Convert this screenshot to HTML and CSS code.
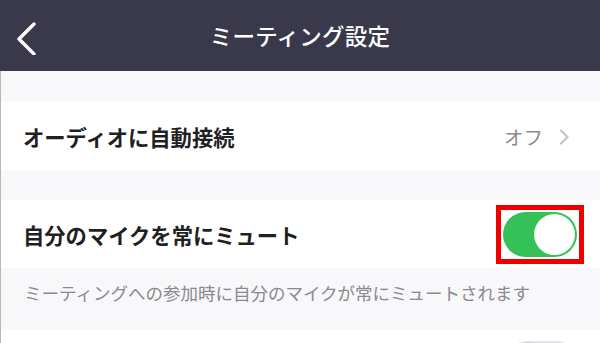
FILE: index.html
```html
<!DOCTYPE html>
<html lang="ja">
<head>
<meta charset="utf-8">
<link rel="stylesheet" href="styles.css">
</head>
<body>
<header class="nav">
  <div class="nav-back">
    <svg width="24" height="36" viewBox="0 0 24 36"><path d="M18 5 L3 20 L18 35" fill="none" stroke="#fff" stroke-width="3.4" stroke-linecap="round" stroke-linejoin="round"/></svg>
  </div>
  <div class="nav-title">ミーティング設定</div>
  <div></div>
</header>
<main class="content">
  <div class="gap gap-top"></div>
  <div class="row">
    <span class="label">オーディオに自動接続</span>
    <span class="value">オフ
      <svg class="chev" width="12" height="16" viewBox="0 0 12 16"><path d="M2 1.5 L8.5 8 L2 14.5" fill="none" stroke="#c5c5c8" stroke-width="2.2" stroke-linecap="round" stroke-linejoin="round"/></svg>
    </span>
  </div>
  <div class="gap"></div>
  <div class="row">
    <span class="label">自分のマイクを常にミュート</span>
    <span class="highlight"><span class="toggle on"><span class="knob"></span></span></span>
  </div>
  <div class="desc">ミーティングへの参加時に自分のマイクが常にミュートされます</div>
  <div class="row row-last">
    <span class="label"></span>
    <span class="toggle-slot"><span class="toggle off"><span class="knob"></span></span></span>
  </div>
</main>
</body>
</html>
```

FILE: styles.css
```css
html, body {
  margin: 0;
  padding: 0;
  background: #ffffff;
  font-family: "Noto Sans CJK JP", "Noto Sans", sans-serif;
  overflow: hidden;
}

.nav {
  height: 71px;
  background: #3a394c;
  display: grid;
  grid-template-columns: 1fr auto 1fr;
  align-items: center;
}

.nav-back {
  padding-left: 16px;
  display: flex;
  align-items: center;
  padding-top: 2px;
}

.nav-title {
  color: #ffffff;
  font-size: 22.5px;
  font-weight: 500;
  letter-spacing: 0.2px;
  padding-bottom: 2px;
}

.content {
  border-left: 1px solid #b8b8b8;
  background: #f8f7f9;
}

.gap {
  height: 30px;
}

.gap-top {
  height: 31px;
}

.row {
  height: 68px;
  background: #ffffff;
  display: flex;
  align-items: center;
  justify-content: space-between;
  padding: 0 16px 0 22px;
}

.label {
  font-size: 21.3px;
  font-weight: 700;
  color: #1f1f24;
}

.value {
  display: flex;
  align-items: center;
  gap: 16px;
  font-size: 19.5px;
  color: #8b8b90;
  padding-right: 13px;
}

.chev {
  margin-top: 1px;
}

.highlight {
  border: 5px solid #ee0000;
  padding: 2px 2px 2px 2px;
  display: flex;
  margin-top: 1px;
}

.toggle {
  width: 74px;
  height: 45px;
  border-radius: 23px;
  box-sizing: border-box;
  position: relative;
  display: block;
}

.toggle.on {
  background: #34c157;
}

.toggle .knob {
  position: absolute;
  top: 2px;
  width: 41px;
  height: 41px;
  border-radius: 50%;
  background: #ffffff;
}

.toggle.on .knob {
  right: 2px;
}

.toggle.off {
  background: #ffffff;
  border: 2px solid #e4e4e8;
}

.toggle.off .knob {
  top: 0;
  left: 0;
  box-shadow: 0 1px 3px rgba(0,0,0,0.25);
}

.toggle-slot {
  padding-right: 5px;
  align-self: flex-start;
  padding-top: 11px;
}

.row-last {
  align-items: flex-start;
}

.desc {
  height: 62px;
  box-sizing: border-box;
  padding: 13px 0 0 23px;
  font-size: 17.5px;
  line-height: 24px;
  color: #8a898e;
}
```
